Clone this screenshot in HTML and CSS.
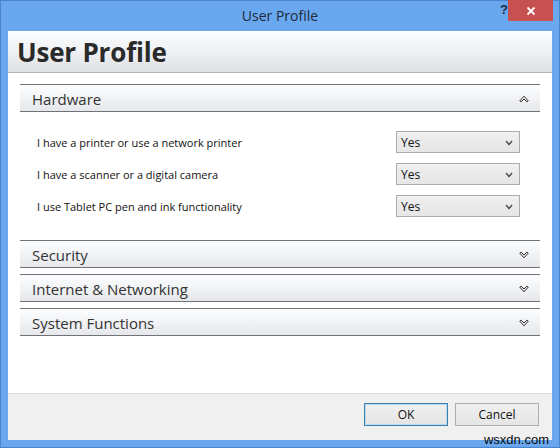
FILE: index.html
```html
<!DOCTYPE html>
<html>
<head>
<meta charset="utf-8">
<link rel="stylesheet" href="styles.css">
</head>
<body>
<div class="window">
  <div class="titlebar">
    <span class="title">User Profile</span>
    <span class="help">?</span>
    <span class="close"><svg width="10" height="10" viewBox="0 0 10 10"><path d="M1.5 1.5L8.5 8.5M8.5 1.5L1.5 8.5" stroke="#fff" stroke-width="1.8"/></svg></span>
  </div>
  <div class="client">
    <div class="banner">User Profile</div>
    <div class="content">
      <div class="section open">
        <div class="sec-head"><span>Hardware</span>
          <svg class="chev" width="10" height="8" viewBox="0 0 10 8"><path d="M0.8 5.8L2.2 6.8L5 4L7.8 6.8L9.2 5.8L5 1.2Z" fill="none" stroke="#2b2b2b" stroke-width="1"/></svg>
        </div>
        <div class="sec-body">
          <div class="row"><span class="label">I have a printer or use a network printer</span><div class="select"><span>Yes</span><svg width="8" height="6" viewBox="0 0 8 6"><path d="M1 1L4 4.5L7 1" fill="none" stroke="#555" stroke-width="1.6"/></svg></div></div>
          <div class="row"><span class="label">I have a scanner or a digital camera</span><div class="select"><span>Yes</span><svg width="8" height="6" viewBox="0 0 8 6"><path d="M1 1L4 4.5L7 1" fill="none" stroke="#555" stroke-width="1.6"/></svg></div></div>
          <div class="row"><span class="label">I use Tablet PC pen and ink functionality</span><div class="select"><span>Yes</span><svg width="8" height="6" viewBox="0 0 8 6"><path d="M1 1L4 4.5L7 1" fill="none" stroke="#555" stroke-width="1.6"/></svg></div></div>
        </div>
      </div>
      <div class="section">
        <div class="sec-head"><span>Security</span>
          <svg class="chev" width="10" height="8" viewBox="0 0 10 8"><path d="M0.8 2.2L2.2 1.2L5 4L7.8 1.2L9.2 2.2L5 6.8Z" fill="none" stroke="#2b2b2b" stroke-width="1"/></svg>
        </div>
      </div>
      <div class="section">
        <div class="sec-head"><span>Internet &amp; Networking</span>
          <svg class="chev" width="10" height="8" viewBox="0 0 10 8"><path d="M0.8 2.2L2.2 1.2L5 4L7.8 1.2L9.2 2.2L5 6.8Z" fill="none" stroke="#2b2b2b" stroke-width="1"/></svg>
        </div>
      </div>
      <div class="section">
        <div class="sec-head"><span>System Functions</span>
          <svg class="chev" width="10" height="8" viewBox="0 0 10 8"><path d="M0.8 2.2L2.2 1.2L5 4L7.8 1.2L9.2 2.2L5 6.8Z" fill="none" stroke="#2b2b2b" stroke-width="1"/></svg>
        </div>
      </div>
    </div>
    <div class="footer">
      <button class="btn default">OK</button>
      <button class="btn">Cancel</button>
    </div>
  </div>
  <div class="watermark">wsxdn.com</div>
</div>
</body>
</html>
```
FILE: styles.css
```css
html, body {
  margin: 0;
  padding: 0;
}
body {
  width: 560px;
  height: 448px;
  overflow: hidden;
  font-family: "Open Sans", "Noto Sans", sans-serif;
}
.window {
  position: relative;
  width: 560px;
  height: 448px;
  box-sizing: border-box;
  background: #69a8ef;
  border: 1px solid #4a86cf;
  display: flex;
  flex-direction: column;
  padding: 0 7px 7px 7px;
}
.titlebar {
  position: relative;
  height: 30px;
  flex: none;
  display: flex;
  justify-content: center;
  align-items: center;
}
.title {
  font-size: 14px;
  color: #1e2a3a;
  margin-top: -2px;
}
.help {
  position: absolute;
  right: 44px;
  top: 1px;
  font-family: "Liberation Sans", sans-serif;
  font-weight: bold;
  font-size: 13px;
  color: #1b2b40;
}
.close {
  position: absolute;
  right: -1px;
  top: -1px;
  width: 45px;
  height: 21px;
  background: #c75050;
  display: flex;
  align-items: center;
  justify-content: center;
}
.client {
  flex: 1;
  background: #fff;
  display: flex;
  flex-direction: column;
}
.banner {
  height: 42px;
  flex: none;
  border-bottom: 1px solid #b2b4b8;
  background: linear-gradient(#fbfcfd 0%, #f2f3f5 40%, #dfe1e4 100%);
  font-size: 26px;
  font-weight: bold;
  color: #2a2a2a;
  padding-left: 9px;
  line-height: 43px;
  letter-spacing: -0.2px;
  box-sizing: border-box;
}
.content {
  flex: 1;
  padding: 11px 12px 0 12px;
  display: flex;
  flex-direction: column;
  gap: 6px;
}
.section.open {
  margin-bottom: 17px;
}
.sec-head {
  height: 28px;
  box-sizing: border-box;
  border-top: 1px solid #6f7377;
  border-bottom: 1px solid #6f7377;
  background: linear-gradient(#fbfdfe 0%, #f2f4f6 45%, #e6e7ea 100%);
  display: flex;
  align-items: center;
  justify-content: space-between;
  padding: 1px 11px 0 12px;
  font-size: 15px;
  color: #333;
}
.sec-body {
  padding: 19px 0 0 17px;
  display: flex;
  flex-direction: column;
  gap: 10px;
}
.row {
  height: 22px;
  display: flex;
  align-items: center;
  justify-content: space-between;
  padding-right: 20px;
}
.label {
  font-size: 11px;
  color: #111;
  padding-top: 1px;
}
.select {
  width: 124px;
  height: 22px;
  box-sizing: border-box;
  border: 1px solid #acacac;
  background: linear-gradient(#f0f0f0, #e6e6e6);
  display: flex;
  align-items: center;
  justify-content: space-between;
  padding: 1px 6px 0 4px;
  font-size: 12px;
  color: #111;
}
.footer {
  height: 47px;
  flex: none;
  box-sizing: border-box;
  border-top: 1px solid #dadada;
  background: #f0f0f0;
  display: flex;
  justify-content: flex-end;
  align-items: flex-start;
  gap: 7px;
  padding: 9px 13px 0 0;
}
.btn {
  width: 84px;
  height: 23px;
  box-sizing: border-box;
  border: 1px solid #adadad;
  background: linear-gradient(#f0f0f0, #e5e5e5);
  font-family: "Open Sans", sans-serif;
  font-size: 12px;
  color: #111;
  padding: 0;
}
.btn.default {
  border-color: #3c7fb1;
  box-shadow: inset 0 0 0 1px #b8d8ef;
}
.watermark {
  position: absolute;
  right: 10px;
  bottom: 0px;
  font-family: "Liberation Sans", Arial, sans-serif;
  font-size: 13px;
  color: #0a0a0a;
  line-height: 14px;
}
```
